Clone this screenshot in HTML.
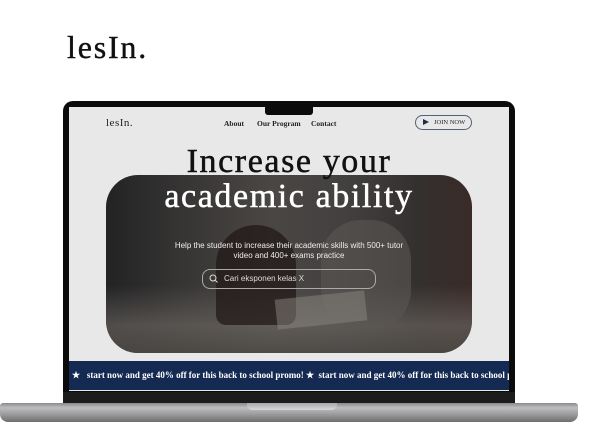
<!DOCTYPE html>
<html><head><style>
body{margin:0;width:592px;height:426px;background:#fff;position:relative;overflow:hidden;font-family:"Liberation Sans",sans-serif}
.abs{position:absolute}
.serif{font-family:"Liberation Serif",serif}
</style></head><body>
<div class="abs serif" style="left:67px;top:29px;font-size:32px;color:#111;letter-spacing:1.8px;-webkit-text-stroke:0.4px #111">lesIn.</div>

<div class="abs" style="left:63px;top:101px;width:452px;height:303px;background:#0b0b0b;border-radius:10px 10px 0 0"></div>
<div class="abs" style="left:63px;top:392px;width:452px;height:12px;background:#1c1c1c"></div>
<div class="abs" style="left:69px;top:107px;width:440px;height:284px;background:#e8e8e8;overflow:hidden">
  <div class="abs serif" style="left:37px;top:10px;font-size:11px;color:#222;letter-spacing:.5px">lesIn.</div>
  <div class="abs serif" style="left:155px;top:12px;font-size:7.5px;color:#222;font-weight:bold">About</div>
  <div class="abs serif" style="left:188px;top:12px;font-size:7.5px;color:#222;font-weight:bold">Our Program</div>
  <div class="abs serif" style="left:242px;top:12px;font-size:7.5px;color:#222;font-weight:bold">Contact</div>
  <div class="abs serif" style="left:346px;top:8px;width:57px;height:15px;border:1px solid #56607a;border-radius:8px;font-size:6.5px;color:#222;line-height:13px;box-sizing:border-box;padding-left:18px">JOIN NOW</div>
  <div class="abs" style="left:354px;top:12px;width:0;height:0;border-left:6px solid #1c2b50;border-top:3.5px solid transparent;border-bottom:3.5px solid transparent"></div>
  <div class="abs" style="left:37px;top:68px;width:366px;height:178px;border-radius:32px;overflow:hidden;background:linear-gradient(90deg,#232324 0%,#3a3837 25%,#4a4644 45%,#434040 65%,#34302f 85%,#3a2a28 100%)">
    <div class="abs" style="left:0;top:110px;width:366px;height:68px;background:linear-gradient(180deg,rgba(120,115,110,0) 0%,rgba(110,105,100,.6) 60%,rgba(80,76,72,.8) 100%)"></div>
    <div class="abs" style="left:110px;top:50px;width:80px;height:100px;border-radius:40px 40px 10px 10px;background:#1e1614;opacity:.7"></div>
    <div class="abs" style="left:215px;top:45px;width:90px;height:110px;border-radius:40px;background:#5a5654;opacity:.6"></div>
    <div class="abs" style="left:170px;top:120px;width:90px;height:30px;background:#8a8580;opacity:.5;transform:rotate(-6deg)"></div>
  </div>
  <div class="abs serif" style="left:0;top:36px;width:440px;text-align:center;font-size:34px;color:#111;letter-spacing:1.6px;-webkit-text-stroke:0.5px #111">Increase your</div>
  <div class="abs serif" style="left:0;top:71px;width:440px;text-align:center;font-size:34px;color:#fff;letter-spacing:1.6px;-webkit-text-stroke:0.5px #fff">academic ability</div>
  <div class="abs" style="left:0;top:134px;width:440px;text-align:center;font-size:8px;color:#eee;line-height:9.5px">Help the student to increase their academic skills with 500+ tutor<br>video and 400+ exams practice</div>
  <div class="abs" style="left:133px;top:162px;width:174px;height:20px;border:1px solid #aaa;border-radius:8px;box-sizing:border-box;font-size:8px;color:#ddd;line-height:18px;padding-left:21px">Cari eksponen kelas X</div>
  <svg class="abs" style="left:140px;top:167px" width="9" height="9" viewBox="0 0 9 9"><circle cx="4" cy="4" r="3" fill="none" stroke="#ddd" stroke-width="1"/><path d="M6.2 6.2L8.5 8.5" stroke="#ddd" stroke-width="1"/></svg>
  <div class="abs serif" style="left:0;top:254px;width:440px;height:29px;background:#152a52;color:#fff;font-size:9px;line-height:29px;white-space:nowrap;padding-left:3px;font-weight:bold">★&nbsp;&nbsp; start now and get 40% off for this back to school promo! ★&nbsp; start now and get 40% off for this back to school promo!</div>
</div>
<div class="abs" style="left:265px;top:101px;width:48px;height:14px;background:#0b0b0b;border-radius:0 0 3px 3px"></div>
<div class="abs" style="left:0;top:403px;width:578px;height:19px;border-radius:3px 3px 8px 8px;background:linear-gradient(180deg,#8a8a8c 0%,#bdbdbf 25%,#9b9b9d 60%,#6e6e70 100%)"></div>
<div class="abs" style="left:247px;top:403px;width:90px;height:7px;border-radius:0 0 5px 5px;background:linear-gradient(180deg,#a8a8aa,#d8d8da)"></div>
</body></html>
